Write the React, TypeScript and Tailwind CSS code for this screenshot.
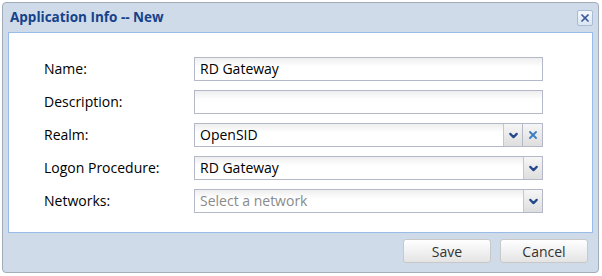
import { ChevronDown, X } from "lucide-react";

const font = { fontFamily: '"Open Sans", "Noto Sans", sans-serif' };

function Field({ value, placeholder }: { value?: string; placeholder?: string }) {
  return (
    <div className="flex h-6 items-center border border-[#b5b8c8] bg-gradient-to-b from-[#eeeeee] to-white to-[40%] px-[5px] text-[14px] leading-none text-black">
      {value ?? <span className="text-[#8a8a8a]">{placeholder}</span>}
    </div>
  );
}

function Trigger({ children, className = "" }: { children: React.ReactNode; className?: string }) {
  return (
    <div className={`flex w-[19px] shrink-0 items-center justify-center border-l border-[#c4c7d2] bg-gradient-to-b from-[#f6f6f6] to-[#dedede] ${className}`}>
      {children}
    </div>
  );
}

function Combo({ value, placeholder, clear }: { value?: string; placeholder?: string; clear?: boolean }) {
  return (
    <div className="flex h-6">
      <div className="flex flex-1 border border-[#b5b8c8]">
        <div className="flex flex-1 items-center bg-gradient-to-b from-[#eeeeee] to-white to-[40%] px-[5px] text-[14px] leading-none text-black">
          {value ?? <span className="text-[#8a8a8a]">{placeholder}</span>}
        </div>
        <Trigger>
          <ChevronDown className="h-[13px] w-[13px] text-[#23478a]" strokeWidth={4} />
        </Trigger>
      </div>
      {clear && (
        <div className="flex w-5 items-center justify-center border border-l-0 border-[#b5b8c8] bg-gradient-to-b from-[#f6f6f6] to-[#dedede]">
          <X className="h-[12px] w-[12px] text-[#3f7fc4]" strokeWidth={4} />
        </div>
      )}
    </div>
  );
}

const rows: { label: string; field: React.ReactNode }[] = [
  { label: "Name:",            field: <Field value="RD Gateway" /> },
  { label: "Description:",     field: <Field value="" /> },
  { label: "Realm:",           field: <Combo value="OpenSID" clear /> },
  { label: "Logon Procedure:", field: <Combo value="RD Gateway" /> },
  { label: "Networks:",        field: <Combo placeholder="Select a network" /> },
];

function Button({ children }: { children: React.ReactNode }) {
  return (
    <button
      type="button"
      className="flex h-6 w-[88px] items-center justify-center rounded-[3px] border border-[#c8c8c8] bg-gradient-to-b from-white to-[#e4e4e4] text-[14px] text-[#333]"
    >
      {children}
    </button>
  );
}

export default function App() {
  return (
    <div className="h-[276px] w-[602px] overflow-hidden bg-white pl-[2px] pt-[2px]" style={font}>
      <div className="flex h-[271px] w-[597px] flex-col rounded-[4px] border border-[#a3adb9] bg-[#cfdbe8]">
        {/* header */}
        <div className="flex h-[29px] shrink-0 items-center justify-between pl-[7px] pr-[5px]">
          <span className="text-[13.5px] font-bold text-[#15428b]">Application Info -- New</span>
          <div className="flex h-[16px] w-[16px] items-center justify-center rounded-[2px] border border-[#a8bcd8] bg-gradient-to-b from-[#f4f8fc] to-[#dbe6f3]">
            <X className="h-[12px] w-[12px] text-[#3d5a98]" strokeWidth={3.5} />
          </div>
        </div>

        {/* body */}
        <div className="mx-[5px] h-[201px] shrink-0 border border-[#99bbe8] bg-white pl-[35px] pr-[49px] pt-[24px]">
          <div className="flex flex-col gap-[9px]">
            {rows.map((r) => (
              <div key={r.label} className="grid grid-cols-[150px_1fr] items-center">
                <span className="text-[14px] leading-none text-black">{r.label}</span>
                {r.field}
              </div>
            ))}
          </div>
        </div>

        {/* footer */}
        <div className="flex flex-1 items-start justify-end gap-[9px] pr-[10px] pt-[6px]">
          <Button>Save</Button>
          <Button>Cancel</Button>
        </div>
      </div>
    </div>
  );
}
